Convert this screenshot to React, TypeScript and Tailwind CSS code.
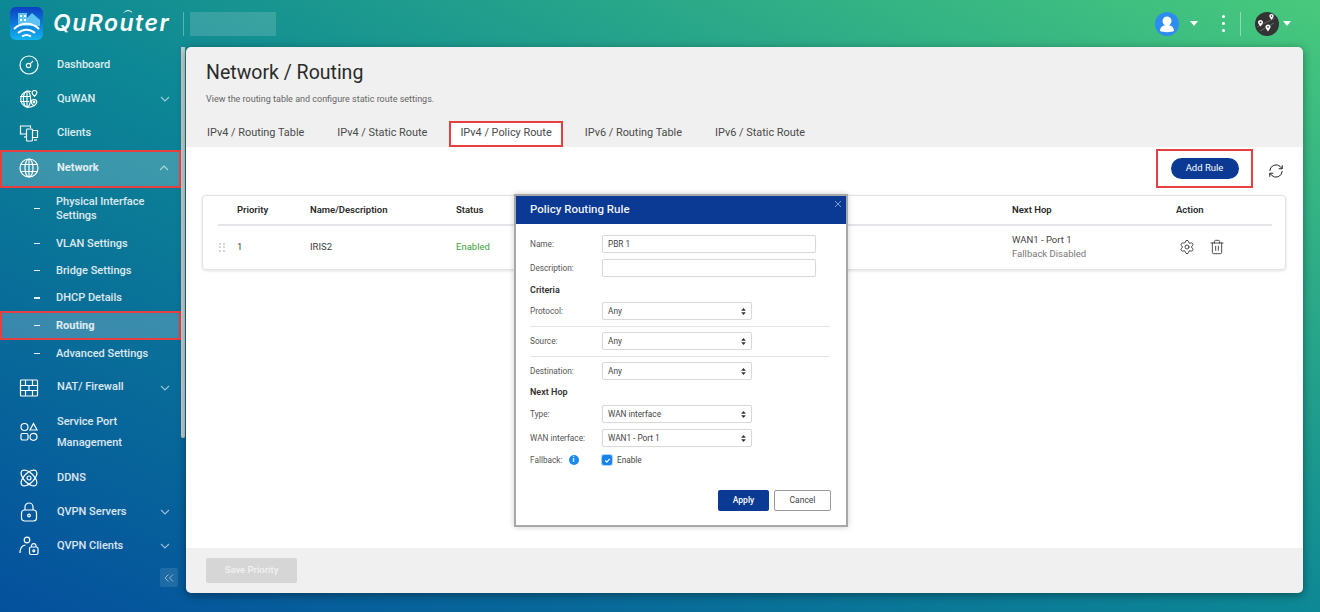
import React from 'react';
import { Settings, Trash2 } from 'lucide-react';

const ic = 'h-[20px] w-[20px] fill-none stroke-white stroke-[1.2]';

const DashIcon = () => (
  <svg viewBox="0 0 20 20" className={ic}>
    <circle cx="10" cy="10" r="9" />
    <circle cx="9.5" cy="10.5" r="2.2" />
    <path d="M11.2 8.8 14 6" />
  </svg>
);
const QuwanIcon = () => (
  <svg viewBox="0 0 20 20" className={ic}>
    <path d="M12 2.5A8 8 0 1 0 14 17" />
    <ellipse cx="8" cy="10" rx="3.6" ry="8" />
    <path d="M1 7.5h11M1 12.5h9M8 2v16" />
    <path d="M15.5 1.5c1.4 0 2.4 1 2.4 2.2 0 1.4-2.4 3.6-2.4 3.6s-2.4-2.2-2.4-3.6c0-1.2 1-2.2 2.4-2.2Z" />
    <path d="M15 10.5c1.6 0 2.8 1.1 2.8 2.5 0 1.7-2.8 4-2.8 4s-2.8-2.3-2.8-4c0-1.4 1.2-2.5 2.8-2.5Z" />
    <circle cx="15" cy="13" r=".8" />
  </svg>
);
const ClientsIcon = () => (
  <svg viewBox="0 0 20 20" className={ic}>
    <path d="M8 11H1.5V3h10v2" />
    <path d="M5 14h3" />
    <rect x="7.5" y="6" width="6" height="12" rx="1" />
    <path d="M13.5 7.5h5v7h-5" />
    <path d="M15 17h3" />
  </svg>
);
const GlobeIcon = () => (
  <svg viewBox="0 0 20 20" className={ic}>
    <circle cx="10" cy="10" r="9" />
    <ellipse cx="10" cy="10" rx="4" ry="9" />
    <path d="M10 1v18M1.8 6.5h16.4M1.8 13.5h16.4" />
  </svg>
);
const WallIcon = () => (
  <svg viewBox="0 0 20 20" className={ic}>
    <rect x="1.5" y="2" width="17" height="16" rx="1" />
    <path d="M1.5 7.5h17M1.5 12.5h17M6.5 2v5.5M13.5 2v5.5M10 7.5v5M6.5 12.5V18M13.5 12.5V18" />
  </svg>
);
const ShapesIcon = () => (
  <svg viewBox="0 0 20 20" className={ic}>
    <circle cx="5.5" cy="5" r="3.5" />
    <path d="M14.5 1.5 18 8h-7Z" />
    <rect x="2" y="11.5" width="7" height="6.5" rx="1.5" />
    <circle cx="14.5" cy="14.8" r="3.5" />
  </svg>
);
const AtomIcon = () => (
  <svg viewBox="0 0 20 20" className={ic}>
    <circle cx="10" cy="10" r="2" />
    <ellipse cx="10" cy="10" rx="10" ry="5" transform="rotate(45 10 10)" />
    <ellipse cx="10" cy="10" rx="10" ry="5" transform="rotate(-45 10 10)" />
  </svg>
);
const LockIcon = () => (
  <svg viewBox="0 0 20 20" className={ic}>
    <rect x="2.5" y="8" width="15" height="11" rx="3" />
    <path d="M6 8V5a4 4 0 0 1 8 0v3" />
    <circle cx="10" cy="13.5" r="1.3" />
  </svg>
);
const UserLockIcon = () => (
  <svg viewBox="0 0 20 20" className={ic}>
    <circle cx="8" cy="4" r="2.8" />
    <path d="M1 17c0-4 2-7.5 5.5-8" />
    <rect x="10.5" y="11" width="8.5" height="7.5" rx="1.5" />
    <path d="M12.5 11V9.5a2.3 2.3 0 0 1 4.5 0V11" />
    <circle cx="14.8" cy="14.8" r="1" />
  </svg>
);

const Chevron = ({ up }: { up?: boolean }) => (
  <svg
    viewBox="0 0 10 6"
    className={`absolute ${up ? 'left-[157px]' : 'left-[160px]'} h-[6px] w-[10px] fill-none stroke-white/60 stroke-[1.1]`}
  >
    <path d={up ? 'M1 5 5 1l4 4' : 'M1 1l4 4 4-4'} />
  </svg>
);

const NavItem = ({
  icon,
  label,
  h,
  open,
  chevron,
  active,
}: {
  icon: React.ReactNode;
  label: React.ReactNode;
  h: string;
  open?: boolean;
  chevron?: boolean;
  active?: boolean;
}) => (
  <div
    className={`relative flex items-center ${h} ${active ? 'border-2 border-[#e5403f] bg-white/20 pb-[2px] pl-[17px] font-bold' : 'pl-[19px]'}`}
  >
    <div className="w-[38px] shrink-0">{icon}</div>
    <div>{label}</div>
    {chevron && <Chevron up={open} />}
  </div>
);

const SubItem = ({ label, h, active }: { label: React.ReactNode; h: string; active?: boolean }) => (
  <div
    className={`flex items-center ${h} ${active ? 'border-2 border-[#e5403f] bg-white/20 pl-[32px] font-bold' : 'pl-[34px]'}`}
  >
    <div className="mr-[16px] h-[1.5px] w-[6px] shrink-0 bg-white/90" />
    <div className="leading-[13.5px]">{label}</div>
  </div>
);

const Sidebar = () => (
  <div className="w-[181px] shrink-0 pt-[1px] text-[11px] font-medium text-white/85">
    <NavItem icon={<DashIcon />} label="Dashboard" h="h-[34px]" />
    <NavItem icon={<QuwanIcon />} label="QuWAN" h="h-[34px]" chevron />
    <NavItem icon={<ClientsIcon />} label="Clients" h="h-[34px]" />
    <NavItem icon={<GlobeIcon />} label="Network" h="h-[38px]" chevron open active />
    <SubItem label={<>Physical Interface<br />Settings</>} h="h-[41px]" />
    <SubItem label="VLAN Settings" h="h-[28px] pt-[1px]" />
    <SubItem label="Bridge Settings" h="h-[27px]" />
    <SubItem label="DHCP Details" h="h-[27px] pt-[1px]" />
    <SubItem label="Routing" h="h-[29px]" active />
    <SubItem label="Advanced Settings" h="h-[27px]" />
    <div className="h-[4px]" />
    <NavItem icon={<WallIcon />} label="NAT/ Firewall" h="h-[33px]" chevron />
    <NavItem icon={<ShapesIcon />} label={<div className="leading-[21px]">Service Port<br />Management</div>} h="h-[55px]" />
    <NavItem icon={<AtomIcon />} label="DDNS" h="mt-[2px] h-[34px]" />
    <NavItem icon={<LockIcon />} label="QVPN Servers" h="h-[34px]" chevron />
    <NavItem icon={<UserLockIcon />} label="QVPN Clients" h="h-[34px]" chevron />
    <div className="mt-[5px] ml-[160px] flex h-[19px] w-[18px] items-center justify-center rounded-[2px] bg-white/10">
      <svg viewBox="0 0 10 8" className="h-[8px] w-[10px] fill-none stroke-white/50 stroke-[1]">
        <path d="M4.5 .5 1 4l3.5 3.5M9 .5 5.5 4 9 7.5" />
      </svg>
    </div>
  </div>
);

const Header = () => (
  <div className="flex h-[47px] shrink-0 items-center pl-[10px] pr-[29px]">
    <svg viewBox="0 0 33 33" className="h-[33px] w-[33px] shrink-0">
      <defs>
        <linearGradient id="app" x1="0" y1="0" x2="0" y2="1">
          <stop offset="0" stopColor="#0b3fc4" />
          <stop offset="1" stopColor="#12b4f0" />
        </linearGradient>
      </defs>
      <rect width="33" height="33" rx="6" fill="url(#app)" />
      <path d="M8 19V6h9v5l5-5 8 7v6Z" fill="#5cc4f2" />
      <path d="M10 8h2v2h-2zM14 8h2v2h-2zM10 12h2v2h-2zM14 12h2v2h-2z" fill="#fff" />
      <path d="M4 22c7-7 18-7 25 0M8 26c5-4.500 12-4.500 17 0M12 29.500c3-2 6-2 9 0" fill="none" stroke="#fff" strokeWidth="2" />
    </svg>
    <div className="relative ml-[10px] w-[117px] whitespace-nowrap font-['Inter',sans-serif] text-[23px] font-semibold italic leading-none tracking-[1.5px] text-white">
      QuRouter
      <svg viewBox="0 0 10 4" className="absolute left-[70px] top-[-3px] h-[4px] w-[10px] fill-none stroke-white stroke-[1]">
        <path d="M1 3.500c2-2.500 6-2.500 8 0" />
      </svg>
    </div>
    <div className="ml-[13px] h-[24px] w-px bg-white/30" />
    <div className="ml-[6px] h-[24px] w-[86px] bg-white/15" />
    <div className="ml-auto flex items-center">
      <svg viewBox="0 0 24 24" className="h-[24px] w-[24px]">
        <circle cx="12" cy="12" r="12" fill="#2d8cf0" />
        <circle cx="12" cy="9" r="4.5" fill="#fff" />
        <path d="M5 19c0-4 3-6 7-6s7 2 7 6c-2 1.500-12 1.500-14 0Z" fill="#fff" />
      </svg>
      <div className="ml-[11px] h-0 w-0 border-x-[4px] border-t-[5px] border-x-transparent border-t-white" />
      <div className="ml-[24px] flex flex-col gap-[3.5px]">
        <div className="h-[3.5px] w-[3.5px] rounded-full bg-white" />
        <div className="h-[3.5px] w-[3.5px] rounded-full bg-white" />
        <div className="h-[3.5px] w-[3.5px] rounded-full bg-white" />
      </div>
      <div className="ml-[15px] h-[24px] w-px bg-white/40" />
      <svg viewBox="0 0 24 24" className="ml-[14px] h-[24px] w-[24px]">
        <circle cx="12" cy="12" r="12" fill="#333" />
        <path d="M2 15 20 6M5 19l14-8" stroke="#666" strokeWidth="1" />
        <path
          fillRule="evenodd"
          d="M5.500 8c1.500 0 2.500 1 2.500 2.200S5.500 14.500 5.500 14.500 3 11.400 3 10.200 4 8 5.500 8Zm0 1.400a.9.9 0 1 0 0 1.800.9.9 0 0 0 0-1.800ZM16.500 2c1.300 0 2.200.9 2.200 2s-2.200 3.800-2.200 3.800S14.300 5.100 14.300 4s.9-2 2.200-2Zm0 1.300a.8.8 0 1 0 0 1.600.8.8 0 0 0 0-1.600ZM13 12.500c1.500 0 2.600 1 2.600 2.300S13 19.500 13 19.500s-2.600-3.400-2.600-4.700 1.100-2.300 2.600-2.300Zm0 1.400a.9.9 0 1 0 0 1.800.9.9 0 0 0 0-1.800Z"
          fill="#fff"
        />
      </svg>
      <div className="ml-[4px] h-0 w-0 border-x-[4px] border-t-[5px] border-x-transparent border-t-white" />
    </div>
  </div>
);

const Tab = ({ label, active }: { label: string; active?: boolean }) => (
  <div
    className={`flex h-[26px] items-center justify-center pb-[1px] ${active ? 'mx-[-11px] border-2 border-[#e5403f] bg-white px-[9px]' : ''} text-[10.9px] text-[#4a4a4a]`}
  >
    {label}
  </div>
);

const Table = () => (
  <div className="ml-[16px] mr-[17px] h-[75px] rounded-[4px] border border-[#e3e3e6] bg-white pl-[15px] pr-[13px] shadow-[0_1px_3px_rgba(0,0,0,0.12)]">
    <div className="grid h-[30px] grid-cols-[19px_73px_146px_556px_auto] items-center border-b-2 border-[#e3e5ea] text-[9.5px] font-semibold text-[#2b2b2b]">
      <div />
      <div>Priority</div>
      <div>Name/Description</div>
      <div>Status</div>
      <div className="grid grid-cols-[164px_auto]">
        <div>Next Hop</div>
        <div>Action</div>
      </div>
    </div>
    <div className="grid h-[42px] grid-cols-[19px_73px_146px_556px_auto] items-center text-[9.5px] text-[#3f3f3f]">
      <div className="grid w-[7px] grid-cols-2 gap-[1.5px] pl-[1px]">
        {[0, 1, 2, 3, 4, 5].map((i) => (
          <div key={i} className="h-[2px] w-[2px] bg-[#d5d5d5]" />
        ))}
      </div>
      <div>1</div>
      <div>IRIS2</div>
      <div className="text-[#3ba13b]">Enabled</div>
      <div className="grid grid-cols-[164px_auto] items-center">
        <div className="leading-[14px]">
          <div>WAN1 - Port 1</div>
          <div className="text-[#777]">Fallback Disabled</div>
        </div>
        <div className="flex items-center gap-[14px] pl-[3px]">
          <Settings size={16} strokeWidth={1.2} color="#222" />
          <Trash2 size={16} strokeWidth={1.2} color="#222" />
        </div>
      </div>
    </div>
  </div>
);

const Arrows = () => (
  <svg viewBox="0 0 6 9" className="h-[7px] w-[5px] fill-[#333]">
    <path d="M3 0 6 3.500H0ZM3 9 0 5.500h6Z" />
  </svg>
);

const Row = ({ label, children, h }: { label: React.ReactNode; children: React.ReactNode; h: string }) => (
  <div className={`flex items-center ${h}`}>
    <div className="flex w-[72px] shrink-0 items-center gap-[6px] text-[8.25px] text-[#555]">{label}</div>
    {children}
  </div>
);

const TextField = ({ value }: { value?: string }) => (
  <div className="flex h-[18px] w-[214px] items-center rounded-[2px] border border-[#d9d9d9] pl-[5px] text-[8.25px] text-[#444] shadow-[0_0_1px_rgba(0,0,0,0.1)]">
    {value}
  </div>
);

const SelectField = ({ value }: { value: string }) => (
  <div className="flex h-[18px] w-[150px] items-center justify-between rounded-[2px] border border-[#d9d9d9] px-[5px] text-[8.25px] text-[#444] shadow-[0_0_1px_rgba(0,0,0,0.1)]">
    {value}
    <Arrows />
  </div>
);

const Modal = () => (
  <div className="absolute left-[514px] top-[194px] h-[333px] w-[334px] border-2 border-[#a8a8a8] bg-white shadow-[0_0_6px_rgba(0,0,0,0.2)]">
    <div className="relative flex h-[28px] items-center bg-[#0b3a94] pb-[1px] pl-[14px] text-[11.5px] font-medium text-white/95">
      Policy Routing Rule
      <svg viewBox="0 0 8 8" className="absolute right-[4px] top-[4px] h-[8px] w-[8px] fill-none stroke-white/60 stroke-[.8]">
        <path d="M1 1l6 6M7 1 1 7" />
      </svg>
    </div>
    <div className="px-[14px] pt-[11px]">
      <Row label="Name:" h="h-[18px]"><TextField value="PBR 1" /></Row>
      <Row label="Description:" h="mt-[6px] h-[18px]"><TextField /></Row>
      <div className="mt-[7px] h-[12px] text-[9px] font-semibold leading-[12px] text-[#333]">Criteria</div>
      <Row label="Protocol:" h="mt-[6px] h-[18px]"><SelectField value="Any" /></Row>
      <div className="mt-[6px] h-px w-[300px] bg-[#e4e4e4]" />
      <Row label="Source:" h="mt-[5px] h-[18px]"><SelectField value="Any" /></Row>
      <div className="mt-[6px] h-px w-[300px] bg-[#e4e4e4]" />
      <Row label="Destination:" h="mt-[5px] h-[18px]"><SelectField value="Any" /></Row>
      <div className="mt-[6px] h-[12px] text-[9px] font-semibold leading-[12px] text-[#333]">Next Hop</div>
      <Row label="Type:" h="mt-[7px] h-[18px]"><SelectField value="WAN interface" /></Row>
      <Row label="WAN interface:" h="mt-[6px] h-[18px]"><SelectField value="WAN1 - Port 1" /></Row>
      <Row
        label={
          <>
            Fallback:
            <div className="flex h-[10px] w-[10px] items-center justify-center rounded-full bg-[#1a8cf0] text-[7px] font-bold leading-none text-white">i</div>
          </>
        }
        h="mt-[5px] h-[16px]"
      >
        <div className="flex items-center gap-[5px] text-[8.25px] text-[#444]">
          <div className="flex h-[10px] w-[10px] items-center justify-center rounded-[2px] bg-[#1682ee] shadow-[0_0_0_1px_rgba(22,130,238,0.35)]">
            <svg viewBox="0 0 8 8" className="h-[7px] w-[7px] fill-none stroke-white stroke-[1.4]">
              <path d="M1.500 4 3.300 5.800 6.500 2.200" />
            </svg>
          </div>
          Enable
        </div>
      </Row>
      <div className="mt-[22px] flex w-[301px] justify-end gap-[5px]">
        <div className="flex h-[21px] w-[51px] items-center justify-center rounded-[2px] bg-[#0b3a94] text-[8.5px] font-medium text-white">Apply</div>
        <div className="flex h-[21px] w-[57px] items-center justify-center rounded-[2px] border border-[#9a9a9a] text-[8.5px] text-[#444]">Cancel</div>
      </div>
    </div>
  </div>
);

const Card = () => (
  <div className="ml-[1px] flex h-[546px] w-[1117px] flex-col overflow-hidden rounded-[5px] bg-[#f0f0f0] shadow-[0_2px_10px_rgba(0,0,0,0.4)]">
    <div className="h-[100px] shrink-0 px-[20px] pt-[14px]">
      <div className="text-[19.5px] leading-[24px] text-[#2b2b2b]">Network / Routing</div>
      <div className="mt-[8px] text-[9px] leading-[12px] text-[#666]">View the routing table and configure static route settings.</div>
      <div className="mt-[16px] ml-[1px] flex gap-[33px]">
        <Tab label="IPv4 / Routing Table" />
        <Tab label="IPv4 / Static Route" />
        <Tab label="IPv4 / Policy Route" active />
        <Tab label="IPv6 / Routing Table" />
        <Tab label="IPv6 / Static Route" />
      </div>
    </div>
    <div className="flex-1 bg-white">
      <div className="flex h-[48px] items-start justify-end pr-[19px] pt-[2px]">
        <div className="flex h-[39px] w-[97px] items-center justify-center border-2 border-[#e5403f]">
          <div className="flex h-[21px] w-[68px] items-center justify-center rounded-full bg-[#0b3a94] text-[9.5px] font-normal text-white">Add Rule</div>
        </div>
        <svg viewBox="0 0 18 18" className="ml-[15px] mt-[14px] h-[16px] w-[16px] fill-none stroke-[#222] stroke-[1.1]">
          <path d="M2 9a7 7 0 0 1 12-4.800L16 6.500M16 2.500v4h-4M16 9a7 7 0 0 1-12 4.800L2 11.500M2 15.500v-4h4" />
        </svg>
      </div>
      <Table />
    </div>
    <div className="flex h-[45px] shrink-0 items-center pl-[20px]">
      <div className="flex h-[25px] w-[91px] items-center justify-center rounded-[2px] bg-[#d6d6d6] text-[9.5px] font-medium text-[#f2f2f2]">Save Priority</div>
    </div>
  </div>
);

export default function App() {
  return (
    <div className="relative flex h-[612px] w-[1320px] flex-col overflow-hidden bg-[linear-gradient(to_top_right,#04509d_0%,#0d8895_50%,#48c97c_100%)] font-['Roboto',sans-serif]">
      <Header />
      <div className="flex flex-1 items-start">
        <Sidebar />
        <div className="h-[391px] w-[4px] shrink-0 rounded-b-[2px] bg-[#c9cccc]" />
        <Card />
      </div>
      <Modal />
    </div>
  );
}
